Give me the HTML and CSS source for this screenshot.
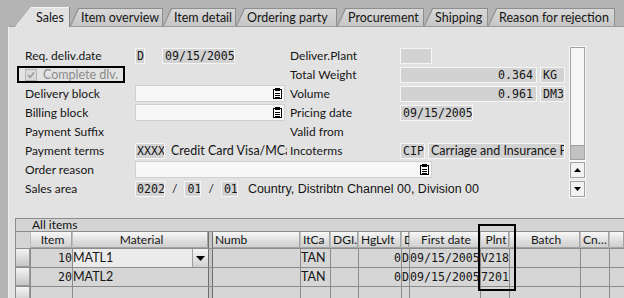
FILE: index.html
```html
<!DOCTYPE html>
<html lang="en">
<head>
  <meta charset="UTF-8" />
  <meta name="viewport" content="width=device-width, initial-scale=1.0"/>
  <title>Sales</title>
  <link rel="stylesheet" href="styles.css">
</head>
<body>

<!-- Tab strip -->
<div class="tabs">
  <div class="tab active t-sales"><span>Sales</span></div>
  <div class="tab t-overview"><span>Item overview</span></div>
  <div class="tab t-detail"><span>Item detail</span></div>
  <div class="tab t-party"><span>Ordering party</span></div>
  <div class="tab t-proc"><span>Procurement</span></div>
  <div class="tab t-ship"><span>Shipping</span></div>
  <div class="tab t-reason"><span>Reason for rejection</span></div>
</div>

<div class="panel">
  <div class="form">
    <!-- row 1 -->
    <div class="lbl">Req. deliv.date</div>
    <div class="fld"><span class="box w-d">D</span><span class="box w-date gap17">09/15/2005</span></div>
    <div class="lbl">Deliver.Plant</div>
    <div class="fld"><span class="box w-plant"></span></div>
    <div class="sb-track"><div class="sb-thumb"></div></div>

    <!-- row 2 -->
    <div class="chk-frame">
      <span class="chk">
        <svg width="10" height="10" viewBox="0 0 10 10"><path d="M2 5l2 2.5 4-5" fill="none" stroke="#9a9a9a" stroke-width="1.6"/></svg>
      </span>
      <span class="chk-text">Complete dlv.</span>
    </div>
    <div></div>
    <div class="lbl">Total Weight</div>
    <div class="fld"><span class="box w-qty r">0.364</span><span class="box w-unit">KG</span></div>

    <!-- row 3 -->
    <div class="lbl">Delivery block</div>
    <div class="fld"><span class="inp w-inp"><svg class="f4" width="9" height="11" viewBox="0 0 9 11"><rect x="0.5" y="1.5" width="8" height="9" fill="#fff" stroke="#000"/><rect x="2" y="0" width="5" height="3" fill="#000"/><path d="M2 5.5h5M2 7.5h5M2 9.5h5" stroke="#000"/></svg></span></div>
    <div class="lbl">Volume</div>
    <div class="fld"><span class="box w-qty r">0.961</span><span class="box w-unit">DM3</span></div>

    <!-- row 4 -->
    <div class="lbl">Billing block</div>
    <div class="fld"><span class="inp w-inp"><svg class="f4" width="9" height="11" viewBox="0 0 9 11"><rect x="0.5" y="1.5" width="8" height="9" fill="#fff" stroke="#000"/><rect x="2" y="0" width="5" height="3" fill="#000"/><path d="M2 5.5h5M2 7.5h5M2 9.5h5" stroke="#000"/></svg></span></div>
    <div class="lbl">Pricing date</div>
    <div class="fld"><span class="box w-date">09/15/2005</span></div>

    <!-- row 5 -->
    <div class="lbl">Payment Suffix</div>
    <div></div>
    <div class="lbl">Valid from</div>
    <div></div>

    <!-- row 6 -->
    <div class="lbl">Payment terms</div>
    <div class="fld clip terms"><span class="box w-key">XXXX</span><span class="txt">Credit Card Visa/MCard</span></div>
    <div class="lbl">Incoterms</div>
    <div class="fld"><span class="box w-unit">CIP</span><span class="box w-qty sans">Carriage and Insurance Paid</span></div>
    <div class="sb-btn r7"><svg width="7" height="4" viewBox="0 0 7 4"><path d="M0 4L3.5 0 7 4z"/></svg></div>

    <!-- row 7 -->
    <div class="lbl">Order reason</div>
    <div class="fld span3"><span class="inp w-long"><svg class="f4" width="9" height="11" viewBox="0 0 9 11"><rect x="0.5" y="1.5" width="8" height="9" fill="#fff" stroke="#000"/><rect x="2" y="0" width="5" height="3" fill="#000"/><path d="M2 5.5h5M2 7.5h5M2 9.5h5" stroke="#000"/></svg></span></div>
    <div class="sb-btn r8"><svg width="7" height="4" viewBox="0 0 7 4"><path d="M0 0L3.5 4 7 0z"/></svg></div>

    <!-- row 8 -->
    <div class="lbl">Sales area</div>
    <div class="fld span3 area">
      <span class="box w-key">0202</span><span>/</span>
      <span class="box w-two">01</span><span>/</span>
      <span class="box w-two">01</span>
      <span class="area-text">Country, Distribtn Channel 00, Division 00</span>
    </div>
  </div>

  <!-- Item table -->
  <div class="items">
    <div class="title">All items</div>

    <div class="row head">
      <div class="blank"></div>
      <div class="hd ctr">Item</div>
      <div class="hd ctr">Material</div>
      <div class="sep"></div>
      <div class="hd">Numb</div>
      <div class="hd">ItCa</div>
      <div class="hd">DGI…</div>
      <div class="hd">HgLvlt</div>
      <div class="hd">D</div>
      <div class="hd ctr">First date</div>
      <div class="hd ctr">Plnt</div>
      <div class="hd ctr">Batch</div>
      <div class="hd">Cn…</div>
      <div class="hd"></div>
    </div>

    <div class="row">
      <div class="sel"></div>
      <div class="c mono r">10</div>
      <div class="c edit">MATL1<span class="dd"><svg width="9" height="5" viewBox="0 0 9 5"><path d="M0 0L4.5 5 9 0z"/></svg></span></div>
      <div class="sep"></div>
      <div class="c"></div>
      <div class="c">TAN</div>
      <div class="c"></div>
      <div class="c mono r">0</div>
      <div class="c mono">D</div>
      <div class="c mono">09/15/2005</div>
      <div class="c mono">V218</div>
      <div class="c"></div>
      <div class="c"></div>
      <div class="c"></div>
    </div>

    <div class="row">
      <div class="sel"></div>
      <div class="c mono r">20</div>
      <div class="c">MATL2</div>
      <div class="sep"></div>
      <div class="c"></div>
      <div class="c">TAN</div>
      <div class="c"></div>
      <div class="c mono r">0</div>
      <div class="c mono">D</div>
      <div class="c mono">09/15/2005</div>
      <div class="c mono">7201</div>
      <div class="c"></div>
      <div class="c"></div>
      <div class="c"></div>
    </div>

    <div class="row">
      <div class="sel"></div>
      <div class="c"></div>
      <div class="c"></div>
      <div class="sep"></div>
      <div class="c"></div>
      <div class="c"></div>
      <div class="c"></div>
      <div class="c"></div>
      <div class="c"></div>
      <div class="c"></div>
      <div class="c"></div>
      <div class="c"></div>
      <div class="c"></div>
      <div class="c"></div>
    </div>

    <div class="mark"></div>
  </div>
</div>

</body>
</html>
```

FILE: styles.css
```css
body {
  margin: 0;
  width: 624px;
  height: 298px;
  overflow: hidden;
  background: #b4b4b4;
  font-family: Lato, "DejaVu Sans", sans-serif;
  font-size: 12px;
  color: #151515;
}

/* tabs */
.tabs {
  display: flex;
  align-items: flex-end;
  height: 26px;
  padding-left: 15px;
  box-sizing: border-box;
}

.tab {
  position: relative;
  height: 18px;
  padding: 1px 1px 0 1px;
  box-sizing: border-box;
  background: #8e8e8e;
  clip-path: polygon(8px 0, 100% 0, 100% 100%, 0 100%);
}

.tab span {
  display: block;
  height: 100%;
  padding-left: 10px;
  background: linear-gradient(#d8d8d8, #c6c6c6);
  clip-path: polygon(8px 0, 100% 0, 100% 100%, 0 100%);
  font-size: 12.5px;
  line-height: 17px;
  white-space: nowrap;
}

.tab.active {
  z-index: 1;
  height: 20px;
  margin-bottom: -1px;
  background: linear-gradient(to left, #8a8a8a 1px, #f4f4f4 1px);
  clip-path: polygon(16px 0, 100% 0, 100% 100%, 0 100%);
}

.tab.active span {
  padding-left: 20px;
  background: #e2e2e2;
  clip-path: polygon(15px 0, 100% 0, 100% 100%, 0 100%);
  line-height: 19px;
}

.t-sales { width: 55px; }
.t-overview { width: 93px; }
.t-detail { width: 73px; }
.t-party { width: 101px; }
.t-proc { width: 87px; }
.t-ship { width: 64px; }
.t-reason { width: 127px; }

/* panel */
.panel {
  margin-left: 8px;
  height: 272px;
  box-sizing: border-box;
  padding: 19px 0 0 6px;
  background: #e2e2e2;
  border-top: 1px solid #9c9c9c;
  border-left: 1px solid #efefef;
  overflow: hidden;
}

.form {
  display: grid;
  grid-template-columns: 110px 155px 110px 170px 15px;
  grid-auto-rows: 19px;
  align-items: center;
  padding-left: 10px;
}

.lbl {
  white-space: nowrap;
}

.fld {
  display: flex;
  align-items: center;
  gap: 3px;
  white-space: nowrap;
}

.clip {
  overflow: hidden;
}

.terms {
  margin-right: 3px;
}

.span3 {
  grid-column: 2 / 5;
}

.box {
  display: block;
  flex: none;
  height: 16px;
  box-sizing: border-box;
  padding: 0 2px;
  background: #d2d2d2;
  border: 1px solid #f5f5f5;
  font-family: "DejaVu Sans Mono", monospace;
  font-size: 11.6px;
  line-height: 14px;
  overflow: hidden;
}

.box.sans {
  font-family: Lato, "DejaVu Sans", sans-serif;
  font-size: 12.5px;
}

.r { text-align: right; }
.ctr { text-align: center; }

.w-d { width: 10px; padding: 0 1px; }
.w-date { width: 73px; }
.gap17 { margin-left: 14px; }
.w-plant { width: 32px; }
.w-qty { width: 137px; padding-right: 3px; }
.w-unit { width: 25px; }
.w-key { width: 30px; padding: 0 1px; }
.w-two { width: 17px; }

.txt {
  margin-left: 3px;
  font-size: 12.5px;
}

.inp {
  display: flex;
  justify-content: flex-end;
  align-items: center;
  height: 17px;
  box-sizing: border-box;
  padding-right: 2px;
  background: #f7f7f7;
  border: 1px solid #d0d0d0;
}

.w-inp { width: 150px; }
.w-long { width: 297px; }

/* checkbox with its marker frame */
.chk-frame {
  display: flex;
  align-items: center;
  gap: 6px;
  width: 108px;
  height: 17px;
  margin-left: -8px;
  padding-left: 6px;
  box-sizing: border-box;
  border: 2px solid #000;
  white-space: nowrap;
}

.chk {
  display: flex;
  align-items: center;
  justify-content: center;
  width: 12px;
  height: 12px;
  box-sizing: border-box;
  background: #dadada;
  border: 1px solid #b4b4b4;
}

.chk-text {
  color: #8c8c8c;
  font-size: 12.5px;
}

.area {
  gap: 7px;
}

.area-text {
  margin-left: 3px;
  font-family: "Liberation Sans", Arial, sans-serif;
  font-size: 12.5px;
}

/* vertical scroll bar */
.sb-track {
  grid-column: 5;
  grid-row: 1 / 7;
  align-self: stretch;
  display: flex;
  flex-direction: column;
  justify-content: flex-end;
  margin-top: 1px;
  background: #f6f6f6;
  border: 1px solid #a0a0a0;
  outline: 1px solid #f8f8f8;
}

.sb-thumb {
  height: 13px;
  background: #c2c2c2;
  border-top: 1px solid #a0a0a0;
}

.sb-btn {
  grid-column: 5;
  display: flex;
  align-items: center;
  justify-content: center;
  height: 16px;
  box-sizing: border-box;
  background: #f2f2f2;
  border: 1px solid #a0a0a0;
  outline: 1px solid #f8f8f8;
}

.r7 { grid-row: 7; }
.r8 { grid-row: 8; }

/* items table */
.items {
  position: relative;
  display: grid;
  gap: 1px;
  margin-top: 20px;
  background: #8c8c8c;
  border: 1px solid #8c8c8c;
  border-right: none;
}

.title {
  height: 12px;
  padding-left: 16px;
  background: #d4d4d4;
  line-height: 12px;
}

.row {
  display: grid;
  grid-template-columns: 14px 41px 135px 3px 87px 29px 27px 42px 7px 70px 28px 70px 28px 1fr;
  gap: 1px;
  height: 18px;
}

.row.head {
  height: 16px;
  background: #bcbcbc;
}

.blank {
  background: #d4d4d4;
}

.hd {
  padding-left: 2px;
  background: linear-gradient(#f8f8f8, #dedede 55%, #cdcdcd);
  box-shadow: inset -1px -1px 0 #a4a4a4;
  line-height: 16px;
  white-space: nowrap;
  overflow: hidden;
}

.sep {
  background: #c6c6c6;
  border-left: 1px solid #6e6e6e;
  border-right: 1px solid #6e6e6e;
  margin: 0 -1px;
}

.sel {
  background: linear-gradient(#f4f4f4, #d6d6d6 60%, #c2c2c2);
  box-shadow: inset -1px -1px 0 #9a9a9a;
}

.c {
  background: #d6d6d6;
  line-height: 18px;
  font-size: 12.5px;
  white-space: nowrap;
  overflow: hidden;
}

.c.mono {
  font-family: "DejaVu Sans Mono", monospace;
  font-size: 11.6px;
}

.c.edit {
  display: flex;
  justify-content: space-between;
  background: #ebebeb;
}

.dd {
  display: flex;
  align-items: center;
  justify-content: center;
  width: 15px;
  background: linear-gradient(#f4f4f4, #d2d2d2);
  border-left: 1px solid #a0a0a0;
}

/* highlight frame around the plant column */
.mark {
  position: absolute;
  left: 462px;
  top: 5px;
  width: 38px;
  height: 67px;
  box-sizing: border-box;
  border: 2px solid #000;
}
```
